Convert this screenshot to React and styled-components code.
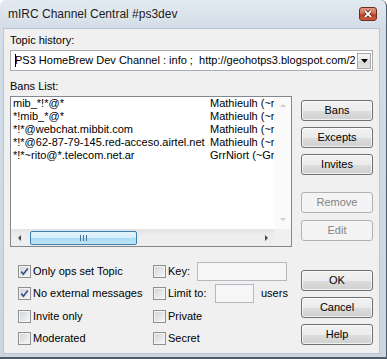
import React from 'react'
import styled, { createGlobalStyle } from 'styled-components'

const GlobalStyle = createGlobalStyle`
  html, body {
    margin: 0;
    padding: 0;
    background: #ffffff;
  }
  body {
    font-family: "Liberation Sans", Arial, sans-serif;
    font-size: 11px;
    color: #000000;
  }
`

const Window = styled.div`
  width: 387px;
  height: 359px;
  box-sizing: border-box;
  display: flex;
  flex-direction: column;
  padding: 0 6px 3px 3px;
  background: linear-gradient(#e2e9f0, #d3dde7 28px, #cbd6e1);
  border-right: 1px solid #4f5b68;
  border-bottom: 2px solid #4f5b68;
  border-radius: 6px 6px 0 0;
  overflow: hidden;
`

const TitleBar = styled.div`
  height: 28px;
  flex: none;
  display: flex;
  align-items: center;
  justify-content: space-between;
  padding-left: 5px;
`

const Title = styled.span`
  font-size: 12px;
  color: #1b1b1b;
  text-shadow: 0 0 6px rgba(255, 255, 255, 0.9);
`

const CloseButton = styled.div`
  width: 18px;
  height: 14px;
  box-sizing: border-box;
  margin-right: 3px;
  margin-bottom: 0;
  border: 1px solid #6e2c1f;
  border-radius: 3px;
  background: linear-gradient(#e39a86, #cf6a4f 50%, #b7412a 51%, #c65a3d);
  display: flex;
  align-items: center;
  justify-content: center;
`

const Client = styled.div`
  flex: 1;
  display: flex;
  flex-direction: column;
  padding: 6px 7px 0 7px;
  background: #f0f0f0;
  box-shadow: inset 0 0 0 1px #b9c5d1;
`

const FieldLabel = styled.div`
  line-height: 13px;
  height: 13px;
  white-space: nowrap;
  margin-top: ${p => p.$top || 0}px;
`

const Combo = styled.div`
  margin-top: 3px;
  height: 21px;
  box-sizing: border-box;
  border: 1px solid #a5acb5;
  background: #ffffff;
  display: flex;
  align-items: center;
  padding: 0 1px 0 4px;
`

const ComboText = styled.div`
  flex: 1;
  overflow: hidden;
  white-space: nowrap;
  position: relative;
  line-height: 13px;
`

const Caret = styled.span`
  position: absolute;
  left: 0;
  top: -1px;
  width: 1px;
  height: 15px;
  background: #000000;
`

const DropButton = styled.div`
  width: 14px;
  height: 16px;
  flex: none;
  box-sizing: border-box;
  margin-left: 2px;
  border: 1px solid #a7a7a7;
  background: linear-gradient(#f7f7f7, #e6e6e6 50%, #d8d8d8 51%, #e3e3e3);
  display: flex;
  align-items: center;
  justify-content: center;
`

const Section = styled.div`
  display: grid;
  grid-template-columns: 282px 72px;
  column-gap: 9px;
  margin-top: ${p => p.$top || 0}px;
`

const ListBox = styled.div`
  margin-top: 3px;
  height: 151px;
  box-sizing: border-box;
  border: 1px solid #828790;
  background: #ffffff;
  display: grid;
  grid-template-columns: 1fr 17px;
  grid-template-rows: 1fr 17px;
`

const ListItems = styled.div`
  overflow: hidden;
`

const ListRow = styled.div`
  display: grid;
  grid-template-columns: 197px 1fr;
  height: 13px;
  line-height: 13px;
  padding-left: 2px;
  white-space: nowrap;
`

const Cell = styled.span`
  overflow: hidden;
`

const VScroll = styled.div`
  background: #fafafa;
  display: flex;
  flex-direction: column;
  justify-content: space-between;
  align-items: center;
  padding: 5px 0;
`

const HScroll = styled.div`
  display: flex;
  align-items: center;
  background: linear-gradient(#e3e3e3, #eeeeee 40%, #eeeeee);
`

const ArrowCell = styled.div`
  width: 17px;
  height: 17px;
  flex: none;
  display: flex;
  align-items: center;
  justify-content: center;
`

const Track = styled.div`
  flex: 1;
  height: 17px;
  display: flex;
  align-items: center;
`

const Thumb = styled.div`
  margin-left: 2px;
  width: 107px;
  height: 14px;
  box-sizing: border-box;
  border: 1px solid #3c7fb1;
  border-radius: 2px;
  background: linear-gradient(#e3f4fc, #d6eefb 50%, #a9dbf6 51%, #bfe5f8);
  display: flex;
  align-items: center;
  justify-content: center;
`

const Corner = styled.div`
  background: #f0f0f0;
`

const ButtonColumn = styled.div`
  display: flex;
  flex-direction: column;
  gap: 6px;
  padding-top: ${p => p.$top || 0}px;
`

const Button = styled.div`
  height: 21px;
  box-sizing: border-box;
  margin-top: ${p => p.$top || 0}px;
  border: 1px solid ${p => (p.$disabled ? '#adb2b5' : '#707070')};
  border-radius: 3px;
  background: ${p =>
    p.$disabled
      ? '#f4f4f4'
      : 'linear-gradient(#f2f2f2, #ebebeb 50%, #dddddd 51%, #cfcfcf)'};
  box-shadow: ${p => (p.$disabled ? 'none' : 'inset 0 0 0 1px rgba(255,255,255,0.7)')};
  color: ${p => (p.$disabled ? '#838383' : '#000000')};
  display: flex;
  align-items: center;
  justify-content: center;
  line-height: 13px;
`

const Options = styled.div`
  margin-top: 13px;
  padding-left: 8px;
  display: grid;
  grid-template-columns: 135px 1fr;
  grid-auto-rows: 22.5px;
  align-items: center;
`

const Option = styled.div`
  display: flex;
  align-items: center;
  gap: 2px;
  white-space: nowrap;
  line-height: 13px;
`

const Box = styled.span`
  width: 13px;
  height: 13px;
  flex: none;
  box-sizing: border-box;
  border: 1px solid #8e8f8f;
  background: linear-gradient(135deg, #cfd2d7, #f8f8f8);
  box-shadow: inset 0 0 0 1px #f4f4f4;
  display: flex;
  align-items: center;
  justify-content: center;
`

const OptionLabel = styled.span`
  width: ${p => (p.$w ? `${p.$w}px` : 'auto')};
`

const TextField = styled.div`
  width: ${p => p.$w}px;
  height: 19px;
  box-sizing: border-box;
  border: 1px solid #b5b9bf;
  background: #f6f6f6;
`

const Suffix = styled.span`
  margin-left: 5px;
`

const bans = [
  ['mib_*!*@*', 'Mathieulh (~mathieulh@host)'],
  ['*!mib_*@*', 'Mathieulh (~mathieulh@host)'],
  ['*!*@webchat.mibbit.com', 'Mathieulh (~mathieulh@host)'],
  ['*!*@62-87-79-145.red-acceso.airtel.net', 'Mathieulh (~mathieulh@host)'],
  ['*!*~rito@*.telecom.net.ar', 'GrrNiort (~GrrNiort@host)'],
]

function Check({ checked, label, w }) {
  return (
    <>
      <Box>
        {checked && (
          <svg width="9" height="9" viewBox="0 0 9 9">
            <path d="M1.2 4.6 L3.4 7.2 L7.8 1.4" fill="none" stroke="#3d5186" strokeWidth="1.7" />
          </svg>
        )}
      </Box>
      <OptionLabel $w={w}>{label}</OptionLabel>
    </>
  )
}

function Arrow({ dir, color }) {
  const paths = {
    up: 'M1 5 L4 2 L7 5 Z',
    down: 'M1 2 L4 5 L7 2 Z',
    left: 'M5 1 L2 4 L5 7 Z',
    right: 'M3 1 L6 4 L3 7 Z',
  }
  return (
    <svg width="8" height="8" viewBox="0 0 8 8">
      <path d={paths[dir]} fill={color} />
    </svg>
  )
}

export default function App() {
  return (
    <>
      <GlobalStyle />
      <Window>
        <TitleBar>
          <Title>mIRC Channel Central #ps3dev</Title>
          <CloseButton>
            <svg width="10" height="8" viewBox="0 0 10 8">
              <path d="M2 1 L8 7 M8 1 L2 7" stroke="#5a1f14" strokeWidth="3.4" />
              <path d="M2 1 L8 7 M8 1 L2 7" stroke="#ffffff" strokeWidth="1.8" />
            </svg>
          </CloseButton>
        </TitleBar>
        <Client>
          <FieldLabel>Topic history:</FieldLabel>
          <Combo>
            <ComboText>
              <Caret />
              PS3 HomeBrew Dev Channel : info ;&nbsp; http://geohotps3.blogspot.com/2009/
            </ComboText>
            <DropButton>
              <svg width="7" height="4" viewBox="0 0 7 4">
                <path d="M0 0 L7 0 L3.5 4 Z" fill="#000000" />
              </svg>
            </DropButton>
          </Combo>

          <Section $top={9}>
            <div>
              <FieldLabel>Bans List:</FieldLabel>
              <ListBox>
                <ListItems>
                  {bans.map(([mask, by]) => (
                    <ListRow key={mask}>
                      <Cell>{mask}</Cell>
                      <Cell>{by}</Cell>
                    </ListRow>
                  ))}
                </ListItems>
                <VScroll>
                  <Arrow dir="up" color="#cfcfcf" />
                  <Arrow dir="down" color="#cfcfcf" />
                </VScroll>
                <HScroll>
                  <ArrowCell>
                    <Arrow dir="left" color="#4a4a4a" />
                  </ArrowCell>
                  <Track>
                    <Thumb>
                      <svg width="7" height="6" viewBox="0 0 7 6">
                        <path d="M0.5 0 V6 M3.5 0 V6 M6.5 0 V6" stroke="#3e6f95" strokeWidth="1" />
                      </svg>
                    </Thumb>
                  </Track>
                  <ArrowCell>
                    <Arrow dir="right" color="#4a4a4a" />
                  </ArrowCell>
                </HScroll>
                <Corner />
              </ListBox>
            </div>
            <ButtonColumn $top={20}>
              <Button>Bans</Button>
              <Button>Excepts</Button>
              <Button>Invites</Button>
              <Button $disabled $top={11}>Remove</Button>
              <Button $disabled $top={1}>Edit</Button>
            </ButtonColumn>
          </Section>

          <Section>
            <Options>
              <Option><Check checked label="Only ops set Topic" /></Option>
              <Option>
                <Check label="Key:" w={27} />
                <TextField $w={90} />
              </Option>
              <Option><Check checked label="No external messages" /></Option>
              <Option>
                <Check label="Limit to:" w={45} />
                <TextField $w={39} />
                <Suffix>users</Suffix>
              </Option>
              <Option><Check label="Invite only" /></Option>
              <Option><Check label="Private" /></Option>
              <Option><Check label="Moderated" /></Option>
              <Option><Check label="Secret" /></Option>
            </Options>
            <ButtonColumn $top={23}>
              <Button>OK</Button>
              <Button>Cancel</Button>
              <Button>Help</Button>
            </ButtonColumn>
          </Section>
        </Client>
      </Window>
    </>
  )
}
